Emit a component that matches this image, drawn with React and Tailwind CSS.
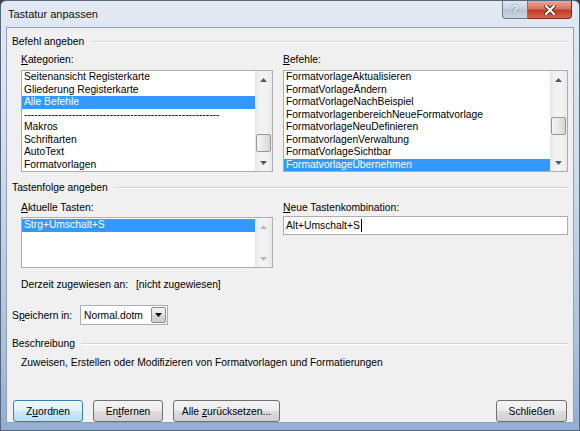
import React from 'react';

const kategorien = [
  'Seitenansicht Registerkarte',
  'Gliederung Registerkarte',
  'Alle Befehle',
  '---------------------------------------------------------',
  'Makros',
  'Schriftarten',
  'AutoText',
  'Formatvorlagen',
];

const befehle = [
  'FormatvorlageAktualisieren',
  'FormatVorlageÄndern',
  'FormatVorlageNachBeispiel',
  'FormatvorlagenbereichNeueFormatvorlage',
  'FormatvorlageNeuDefinieren',
  'FormatvorlagenVerwaltung',
  'FormatVorlageSichtbar',
  'FormatvorlageÜbernehmen',
];

const Arrow = ({ down, faded }) => (
  <svg width="7" height="4" viewBox="0 0 7 4">
    <polygon points={down ? '0,0 7,0 3.5,4' : '0,4 7,4 3.5,0'} fill={faded ? '#b8b8b8' : '#505a66'} />
  </svg>
);

const ScrollBar = ({ thumbOffset, faded }) => (
  <div className="flex w-[17px] flex-col bg-[linear-gradient(to_right,#e6e6e6,#f2f2f2_30%,#f2f2f2_70%,#e9e9e9)]">
    <div className="flex h-[17px] items-center justify-center"><Arrow faded={faded} /></div>
    <div className="flex flex-1 flex-col items-center">
      {thumbOffset !== undefined && (
        <>
          <div style={{ height: thumbOffset }} />
          <div className="h-[18px] w-[15px] rounded-[2px] border border-[#979797] bg-[linear-gradient(to_right,#f4f4f4,#e8e8e8_50%,#d6d6d6)]" />
        </>
      )}
    </div>
    <div className="flex h-[17px] items-center justify-center"><Arrow down faded={faded} /></div>
  </div>
);

const Row = ({ text, selected }) => (
  <div className={`h-[12.5px] whitespace-nowrap pl-[2px] leading-[12.5px] ${selected ? 'bg-[#3399ff] text-white' : 'text-black'}`}>
    {text}
  </div>
);

const Header = ({ children }) => (
  <div className="ml-[5px] mr-[5px] flex h-[13px] items-center gap-[6px] leading-[13px]">
    <span>{children}</span>
    <div className="h-[2px] flex-1 border-t border-[#d5d5d5] border-b border-b-white" />
  </div>
);

const Button = ({ children, focused, className = '' }) => (
  <div
    className={`flex h-[22px] items-center justify-center rounded-[3px] border ${
      focused
        ? 'border-[#3c7fb1] bg-[linear-gradient(to_bottom,#edf7fd_0%,#e1f2fc_50%,#c9eafc_50%,#b4dff6_100%)]'
        : 'border-[#707070] bg-[linear-gradient(to_bottom,#f3f3f3_0%,#ececec_50%,#dddddd_50%,#d0d0d0_100%)]'
    } ${className}`}
  >
    <span className="leading-[13px]">{children}</span>
  </div>
);

export default function App() {
  return (
    <div className="h-[431px] w-[580px] bg-[#3a3f47] font-['Liberation_Sans',Arial,sans-serif] text-[10.3px] text-black">
      <div className="flex h-full w-full flex-col rounded-t-[6px] border border-[#55677f] bg-[linear-gradient(to_bottom,#e2e9f2,#d3deec_35%,#abc0dc_80%,#93add3)] px-[5px] pb-[7px]">
        {/* title bar */}
        <div className="flex h-[27px] items-start justify-between">
          <div className="pl-[2px] pt-[6px] text-[11px] leading-[14px] text-[#101010]">Tastatur anpassen</div>
          <div className="mr-[2px] flex">
            <div className="flex h-[18px] w-[26px] items-center justify-center rounded-bl-[4px] border border-t-0 border-[#6b7b8e] bg-[linear-gradient(to_bottom,#dfe6ef,#c7d2df_50%,#b7c4d4_50%,#cbd6e3)] text-[11px] font-bold text-white [text-shadow:0_0_2px_#3a4a5e]">
              ?
            </div>
            <div className="flex h-[18px] w-[44px] items-center justify-center rounded-br-[4px] border border-l-0 border-t-0 border-[#7a2a20] bg-[linear-gradient(to_bottom,#e9a99b,#d7725f_45%,#c23d26_55%,#d5654b)]">
              <svg width="12" height="10" viewBox="0 0 12 10">
                <path d="M2 1 L10 9 M10 1 L2 9" stroke="#5a1e14" strokeWidth="4" strokeLinecap="square" />
                <path d="M2 1 L10 9 M10 1 L2 9" stroke="#ffffff" strokeWidth="2.2" strokeLinecap="square" />
              </svg>
            </div>
          </div>
        </div>

        {/* client */}
        <div className="flex flex-1 flex-col border border-[#8fa3bd] bg-[#f0f0f0]">
          <div className="mt-[7px]"><Header>Befehl angeben</Header></div>

          <div className="ml-[14px] mt-[5px] flex gap-[10px]">
            <div className="w-[252px]">
              <div className="h-[13px] leading-[13px]"><u>K</u>ategorien:</div>
              <div className="mt-[4px] flex h-[102px] border border-[#abadb3] bg-white">
                <div className="flex-1 overflow-hidden">
                  {kategorien.map((t, i) => (
                    <Row key={i} text={t} selected={i === 2} />
                  ))}
                </div>
                <ScrollBar thumbOffset={46} />
              </div>
            </div>
            <div className="w-[285px]">
              <div className="h-[13px] leading-[13px]"><u>B</u>efehle:</div>
              <div className="mt-[4px] flex h-[102px] border border-[#abadb3] bg-white">
                <div className="flex-1 overflow-hidden">
                  {befehle.map((t, i) => (
                    <Row key={i} text={t} selected={i === 7} />
                  ))}
                </div>
                <ScrollBar thumbOffset={29} />
              </div>
            </div>
          </div>

          <div className="mt-[9px]"><Header>Tastenfolge angeben</Header></div>

          <div className="ml-[14px] mt-[7px] flex gap-[10px]">
            <div className="w-[252px]">
              <div className="h-[13px] leading-[13px]"><u>A</u>ktuelle Tasten:</div>
              <div className="mt-[3px] flex h-[51px] border border-[#abadb3] bg-white">
                <div className="flex-1 overflow-hidden pt-[1px]">
                  <Row text="Strg+Umschalt+S" selected />
                </div>
                <ScrollBar faded />
              </div>
            </div>
            <div className="w-[285px]">
              <div className="h-[13px] leading-[13px]"><u>N</u>eue Tastenkombination:</div>
              <div className="mt-[2px] flex h-[19px] items-center border border-[#abadb3] bg-white pl-[2px]">
                <span className="leading-[13px]">Alt+Umschalt+S</span>
                <span className="ml-[1px] h-[13px] w-px bg-black" />
              </div>
            </div>
          </div>

          <div className="ml-[14px] mt-[10px] flex h-[13px] leading-[13px]">
            <span className="w-[115px]">Derzeit zugewiesen an:</span>
            <span>[nicht zugewiesen]</span>
          </div>

          <div className="ml-[5px] mt-[14px] flex h-[20px] items-center">
            <span className="w-[68px] leading-[13px]">S<u>p</u>eichern in:</span>
            <div className="flex h-[20px] w-[88px] border border-[#abadb3] bg-white">
              <div className="flex flex-1 items-center pl-[3px] leading-[13px]">Normal.dotm</div>
              <div className="m-px flex w-[15px] items-center justify-center rounded-[2px] border border-[#8a8a8a] bg-[linear-gradient(to_bottom,#f2f2f2,#e6e6e6_50%,#d6d6d6_50%,#cfcfcf)]">
                <svg width="7" height="4" viewBox="0 0 7 4"><polygon points="0,0 7,0 3.5,4" fill="#000" /></svg>
              </div>
            </div>
          </div>

          <div className="mt-[12px]"><Header>Beschreibung</Header></div>

          <div className="ml-[14px] mt-[6px] h-[13px] leading-[13px]">
            Zuweisen, Erstellen oder Modifizieren von Formatvorlagen und Formatierungen
          </div>

          <div className="mx-[6px] mt-[31px] flex">
            <div className="flex gap-[10px]">
              <Button focused className="w-[70px]">Z<u>u</u>ordnen</Button>
              <Button className="w-[70px]">En<u>t</u>fernen</Button>
              <Button className="w-[107px]">Alle <u>z</u>urücksetzen...</Button>
            </div>
            <div className="flex-1" />
            <Button className="w-[71px]">Schließen</Button>
          </div>
        </div>
      </div>
    </div>
  );
}
